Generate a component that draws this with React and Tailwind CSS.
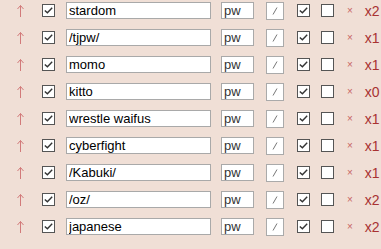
import React from "react";

const rows = [
  { name: "stardom", count: 2 },
  { name: "/tjpw/", count: 1 },
  { name: "momo", count: 1 },
  { name: "kitto", count: 0 },
  { name: "wrestle waifus", count: 1 },
  { name: "cyberfight", count: 1 },
  { name: "/Kabuki/", count: 1 },
  { name: "/oz/", count: 2 },
  { name: "japanese", count: 2 },
];

function Box({ checked }) {
  return (
    <span className="w-[13px] h-[13px] border border-[#555] bg-white flex items-center justify-center">
      {checked && (
        <svg width="9" height="7" viewBox="0 0 9 7">
          <path d="M0.8 3.4 L3.4 5.8 L8.2 0.8" fill="none" stroke="#333" strokeWidth="1.4" />
        </svg>
      )}
    </span>
  );
}

export default function App() {
  return (
    <div className="w-[381px] h-[249px] bg-[#f0dfd6] font-['Liberation_Sans',Arial,sans-serif] overflow-hidden">
      <div className="-mt-[3px] flex flex-col">
        {rows.map((r, i) => (
          <div key={i} className="h-[27px] flex items-center">
            <svg className="ml-[16px]" width="9" height="13" viewBox="0 0 9 13">
              <path d="M4.5 1.5 V13 M1.5 5 L4.5 1.5 L7.5 5" fill="none" stroke="#d27a7a" strokeWidth="1" />
            </svg>
            <span className="ml-[17px]">
              <Box checked />
            </span>
            <input
              readOnly
              value={r.name}
              className="ml-[11px] w-[145px] h-[17px] border border-[#a9a9a9] bg-white px-[2px] text-[13px] text-black outline-none"
            />
            <input
              readOnly
              value="pw"
              className="ml-[10px] w-[33px] h-[17px] border border-[#a9a9a9] bg-white px-[2px] text-[13px] text-[#333] outline-none"
            />
            <button className="ml-[12px] w-[18px] h-[18px] border border-[#aaa] bg-white flex items-center justify-center">
              <svg width="6" height="8" viewBox="0 0 6 8">
                <path d="M1 7.5 L5 0.5" fill="none" stroke="#777" strokeWidth="1" />
              </svg>
            </button>
            <span className="ml-[13px]">
              <Box checked />
            </span>
            <span className="ml-[11px]">
              <Box />
            </span>
            <span className="ml-[13px] text-[10px] text-[#c86464] leading-none">×</span>
            <span className="ml-[12px] text-[14px] text-[#a83232] leading-none">x{r.count}</span>
          </div>
        ))}
      </div>
    </div>
  );
}
